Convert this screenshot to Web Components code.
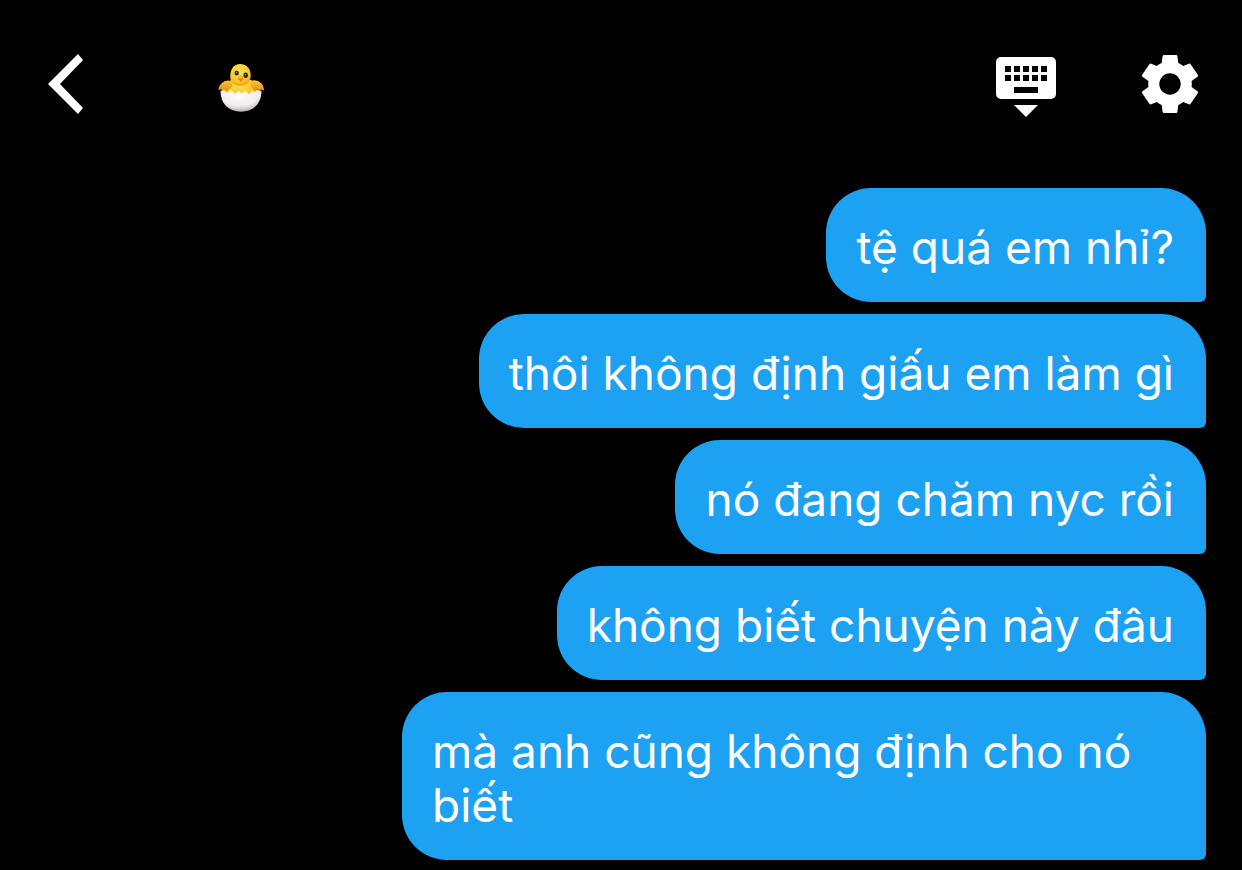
<!DOCTYPE html>
<html lang="vi">
<head>
<meta charset="utf-8">
<meta name="viewport" content="width=device-width, initial-scale=1">
<title>Chat</title>
<style>
    body {
        margin: 0;
        background: #000;
        color: #fff;
        font-family: Inter, "Noto Sans", sans-serif;
    }
</style>
</head>
<body>

<chat-page>
    <chat-header slot="header">
        <icon-button slot="back" label="Quay lại">
            <svg width="36" height="60" viewBox="0 0 36 60" fill="#fff"><path d="M0 30 30 0l5 6-23 24 23 24-5 6z"/></svg>
        </icon-button>
        <chick-emoji></chick-emoji>
        <icon-button slot="actions" label="Ẩn bàn phím">
            <svg width="60" height="66" viewBox="0 0 60 66" fill="#fff">
                <path fill-rule="evenodd" d="M5 6h50a5 5 0 0 1 5 5v32a5 5 0 0 1-5 5H5a5 5 0 0 1-5-5V11a5 5 0 0 1 5-5zM9 15v6h6v-6zM18 15v6h6v-6zM27 15v6h6v-6zM36 15v6h6v-6zM45 15v6h6v-6zM9 24v6h6v-6zM18 24v6h6v-6zM27 24v6h6v-6zM36 24v6h6v-6zM45 24v6h6v-6zM18 36v6h24v-6z"/>
                <path d="M18 54h24L30 66z"/>
            </svg>
        </icon-button>
        <icon-button slot="actions" label="Cài đặt">
            <svg width="60" height="60" viewBox="0 0 60 60" fill="#fff">
                <path fill-rule="evenodd" d="M24 1h12q1.200 0 1.400 1.200L38.300 9q2.500 1 4.900 3l5.600-2.300q1.200-.5 2 .7l7 10.400q.7 1.200-.3 2L51.600 27q.4 3 0 6l5.900 4.200q1 .8.3 2l-7 10.400q-.8 1.200-2 .7L43.200 48q-2.400 2-4.900 3l-.9 6.800Q37.200 59 36 59H24q-1.200 0-1.400-1.200L21.700 51q-2.500-1-4.900-3l-5.600 2.300q-1.200.5-2-.7l-7-10.400q-.7-1.200.3-2L8.400 33q-.4-3 0-6l-5.900-4.200q-1-.8-.3-2l7-10.400q.8-1.200 2-.7l5.600 2.300q2.400-2 4.900-3l.9-6.800Q22.800 1 24 1zM30 19.300a10.700 10.700 0 1 0 0 21.400 10.700 10.700 0 0 0 0-21.400z"/>
            </svg>
        </icon-button>
    </chat-header>
    <chat-bubble>tệ quá em nhỉ?</chat-bubble>
    <chat-bubble>thôi không định giấu em làm gì</chat-bubble>
    <chat-bubble>nó đang chăm nyc rồi</chat-bubble>
    <chat-bubble>không biết chuyện này đâu</chat-bubble>
    <chat-bubble>mà anh cũng không định cho nó biết</chat-bubble>
</chat-page>

<script>
class ChatPage extends HTMLElement {

    constructor() {
        super();
        this.shadow = this.attachShadow({mode: 'open'});
        this.render();
    }

    render() {
        this.shadow.innerHTML =
        `
        <style>
            :host {
                display: block;
            }

            main {
                display: flex;
                flex-direction: column;
                align-items: flex-end;
                gap: 12px;
                padding: 20px 36px 10px 0;
            }
        </style>
        <slot name="header"></slot>
        <main><slot></slot></main>
        `;
    }
}

class ChatHeader extends HTMLElement {

    constructor() {
        super();
        this.shadow = this.attachShadow({mode: 'open'});
        this.render();
    }

    render() {
        this.shadow.innerHTML =
        `
        <style>
            :host {
                display: block;
            }

            header {
                display: flex;
                align-items: center;
                min-height: 168px;
                padding: 0 42px 0 48px;
                box-sizing: border-box;
            }

            h1 {
                display: flex;
                flex: 1;
                margin: 0 0 0 133px;
                font-size: 46px;
            }

            nav {
                display: flex;
                align-items: center;
                gap: 84px;
            }
        </style>
        <header>
            <slot name="back"></slot>
            <h1><slot></slot></h1>
            <nav><slot name="actions"></slot></nav>
        </header>
        `;
    }
}

class IconButton extends HTMLElement {

    constructor() {
        super();
        this.shadow = this.attachShadow({mode: 'open'});
        this.render();
    }

    render() {
        this.shadow.innerHTML =
        `
        <style>
            :host {
                display: block;
            }

            button {
                display: flex;
                padding: 0;
                border: 0;
                background: transparent;
                color: inherit;
                cursor: pointer;
            }

            button:hover {
                opacity: 0.8;
            }
        </style>
        <button type="button" aria-label="${this.getAttribute('label')}"><slot></slot></button>
        `;
    }
}

class ChickEmoji extends HTMLElement {

    constructor() {
        super();
        this.shadow = this.attachShadow({mode: 'open'});
        this.render();
    }

    render() {
        this.shadow.innerHTML =
        `
        <style>
            :host {
                display: block;
            }

            svg {
                display: block;
            }
        </style>
        <svg width="48" height="56" viewBox="0 0 48 56" role="img" aria-label="🐣">
            <defs>
                <radialGradient id="head" cx=".45" cy=".3" r=".75">
                    <stop offset="0" stop-color="#ffe04a"/>
                    <stop offset=".6" stop-color="#fdc82e"/>
                    <stop offset="1" stop-color="#eda01a"/>
                </radialGradient>
                <linearGradient id="wing" x1="0" y1="0" x2="0" y2="1">
                    <stop offset="0" stop-color="#ffc532"/>
                    <stop offset="1" stop-color="#e08a12"/>
                </linearGradient>
                <radialGradient id="shell" cx=".45" cy=".25" r=".8">
                    <stop offset="0" stop-color="#fff"/>
                    <stop offset=".6" stop-color="#efedea"/>
                    <stop offset="1" stop-color="#aaa6a0"/>
                </radialGradient>
            </defs>
            <path fill="#8a4a12" d="M5 33 14 29h20l9 4-2 5H7z"/>
            <path fill="url(#head)" d="M14 24h20q6 4 6 12l-5 6H13l-6-6q1-8 7-12z"/>
            <path fill="url(#wing)" d="M14 25Q9 23.500 5 27 1.500 30 1.500 34l3-.7v2l4-1.500v2l4-3 3-2zM33 25q7-2 11 2 3 3 3 7.500l-3-1-1 1.500-3-2-2 2-4-4z"/>
            <path fill="url(#head)" d="M23 8c7 0 11 5.500 10.700 12-.3 6-4 10-10.200 10-7 0-10.500-4-10.300-10C13.500 13 16.500 8 23 8z"/>
            <ellipse cx="19.700" cy="17" rx="2.200" ry="2.500" fill="#2d2b22"/>
            <ellipse cx="28.700" cy="19.300" rx="2.200" ry="2.700" fill="#2d2b22"/>
            <circle cx="19.400" cy="16.500" r=".8" fill="#8d8b72"/>
            <circle cx="28.400" cy="18.700" r=".8" fill="#8d8b72"/>
            <path fill="#ef7f14" d="M23.500 19.500q3 1.500 3 3.500l-2.500 3-3-3q0-2 2.500-3.500z"/>
            <path fill="#ffae37" d="M23.500 19.500q2 1 2.500 2.500l-2.300 1-2.200-1q.5-1.500 2-2.500z"/>
            <path fill="url(#shell)" d="M3.500 35 7 34l3 3 4-3 4 4 3-3 4 2.500 3-3 4 3.500 3-3 3 1 2-2 4.500 1C44.500 48 36 55.700 24 55.700S3.500 48 3.500 35z"/>
        </svg>
        `;
    }
}

class ChatBubble extends HTMLElement {

    constructor() {
        super();
        this.shadow = this.attachShadow({mode: 'open'});
        this.render();
    }

    render() {
        this.shadow.innerHTML =
        `
        <style>
            :host {
                display: block;
                box-sizing: border-box;
                max-width: calc(100% * 2 / 3);
                padding: 32px 32px 28px 30px;
                border-radius: 45px 45px 6px 45px;
                background: #1da1f2;
                color: #fff;
                font-size: 46px;
                line-height: 54px;
            }

            p {
                margin: 0;
            }
        </style>
        <p><slot></slot></p>
        `;
    }
}

customElements.define('chat-page', ChatPage);
customElements.define('chat-header', ChatHeader);
customElements.define('icon-button', IconButton);
customElements.define('chick-emoji', ChickEmoji);
customElements.define('chat-bubble', ChatBubble);
</script>
</body>
</html>
